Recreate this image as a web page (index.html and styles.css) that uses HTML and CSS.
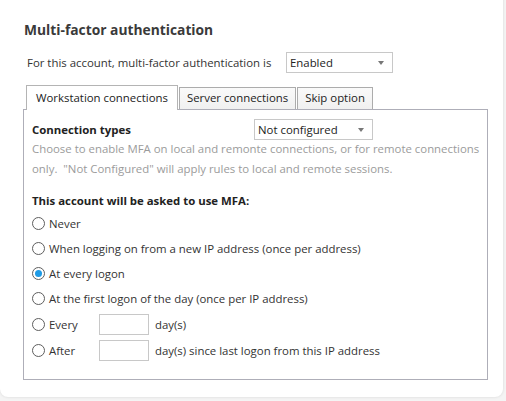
FILE: index.html
```html
<!DOCTYPE html>
<html>
<head>
<meta charset="utf-8">
<link rel="stylesheet" href="styles.css">
</head>
<body>
<div class="card">
  <h1 class="title">Multi-factor authentication</h1>
  <div class="status-row">
    <span class="label">For this account, multi-factor authentication is</span>
    <div class="select select-status"><span>Enabled</span><i class="arrow"></i></div>
  </div>
  <div class="tabs">
    <div class="tab active">Workstation connections</div>
    <div class="tab">Server connections</div>
    <div class="tab">Skip option</div>
  </div>
  <div class="panel">
    <div class="conn-row">
      <span class="bold">Connection types</span>
      <div class="select select-conn"><span>Not configured</span><i class="arrow"></i></div>
    </div>
    <p class="desc">Choose to enable MFA on local and remonte connections, or for remote connections only.&nbsp; "Not Configured" will apply rules to local and remote sessions.</p>
    <div class="bold heading">This account will be asked to use MFA:</div>
    <div class="radio-row"><span class="radio"></span><span>Never</span></div>
    <div class="radio-row"><span class="radio"></span><span>When logging on from a new IP address (once per address)</span></div>
    <div class="radio-row"><span class="radio checked"></span><span>At every logon</span></div>
    <div class="radio-row"><span class="radio"></span><span>At the first logon of the day (once per IP address)</span></div>
    <div class="radio-row input-row"><span class="radio"></span><span class="rlabel">Every</span><span class="field"></span><span>day(s)</span></div>
    <div class="radio-row input-row"><span class="radio"></span><span class="rlabel">After</span><span class="field"></span><span>day(s) since last logon from this IP address</span></div>
  </div>
</div>
</body>
</html>
```
FILE: styles.css
```css
html, body {
  margin: 0;
  padding: 0;
}
body {
  background: #f4f4f4;
  font-family: "Open Sans", "Noto Sans", sans-serif;
  font-size: 11.4px;
  color: #333;
  width: 506px;
  height: 401px;
  overflow: hidden;
}
.card {
  box-sizing: border-box;
  background: #fff;
  width: 503px;
  height: 407px;
  margin-top: -10px;
  border-radius: 8px;
  box-shadow: 0 0 3px rgba(0, 0, 0, 0.12);
  padding: 30px 0 0 0;
}
.title {
  margin: 0 0 0 24px;
  font-size: 13.8px;
  font-weight: 700;
  line-height: 20px;
  color: #3a3a3a;
}
.status-row {
  display: flex;
  align-items: center;
  margin: 12px 0 0 27px;
  height: 21px;
}
.label {
  width: 259px;
}
.select {
  box-sizing: border-box;
  height: 21px;
  border: 1px solid #c8c8c8;
  display: flex;
  align-items: center;
  justify-content: space-between;
  padding: 0 8px 0 3px;
  color: #222;
  background: #fff;
}
.select-status { width: 107px; }
.select-conn { width: 119px; }
.arrow {
  width: 0;
  height: 0;
  border-left: 3.5px solid transparent;
  border-right: 3.5px solid transparent;
  border-top: 4px solid #777;
}
.tabs {
  display: flex;
  align-items: flex-end;
  margin: 12px 0 0 26px;
  height: 24px;
  position: relative;
  z-index: 1;
}
.tab {
  box-sizing: border-box;
  height: 22px;
  line-height: 20px;
  border: 1px solid #acacac;
  border-bottom: none;
  padding: 0 7px;
  margin-right: 1px;
  background: linear-gradient(#fafafa, #f0f0f0);
  color: #222;
}
.tab.active {
  height: 25px;
  margin-bottom: -1px;
  line-height: 24px;
  padding: 0 9px;
  background: #fff;
  border-color: #b4b4b4;
}
.panel {
  box-sizing: border-box;
  margin-left: 23px;
  width: 465px;
  height: 271px;
  border: 1px solid #aeaeb8;
  padding: 9px 2px 0 8px;
}
.conn-row {
  display: flex;
  align-items: center;
  justify-content: space-between;
  height: 21px;
  width: 341px;
}
.bold {
  font-weight: 700;
  color: #222;
}
.desc {
  margin: -1px 0 0 0;
  line-height: 20px;
  color: #9b9b9b;
}
.heading {
  margin-top: 12px;
  line-height: 20px;
}
.radio-row {
  display: flex;
  align-items: center;
  height: 25px;
  color: #333;
}
.input-row {
  height: 26px;
}
.radio {
  box-sizing: border-box;
  width: 13px;
  height: 13px;
  border: 1px solid #5e5e5e;
  border-radius: 50%;
  margin-right: 4px;
  display: flex;
  align-items: center;
  justify-content: center;
  background: #fff;
}
.radio.checked::after {
  content: "";
  width: 7px;
  height: 7px;
  border-radius: 50%;
  background: #1e9be6;
}
.rlabel {
  width: 50px;
}
.field {
  box-sizing: border-box;
  width: 50px;
  height: 21px;
  border: 1px solid #c8c8c8;
  margin-right: 6px;
}
```
